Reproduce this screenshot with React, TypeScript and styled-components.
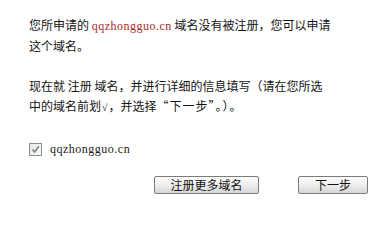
import styled, { createGlobalStyle } from "styled-components";

const GlobalStyle = createGlobalStyle`
  html, body {
    margin: 0;
    padding: 0;
    background: #ffffff;
  }
  body {
    font-family: "Noto Sans CJK SC", "Noto Sans", sans-serif;
    color: #141414;
  }
`;

const App = () => {
  return (
    <>
      <GlobalStyle />
      <Page lang="zh-CN">
        <Paragraph>
          <Line>
            您所申请的 <Domain $red>qqzhongguo.cn</Domain> 域名没有被注册，您可以申请
          </Line>
          <Line>这个域名。</Line>
        </Paragraph>
        <Paragraph $gap>
          <Line>现在就 注册 域名，并进行详细的信息填写（请在您所选</Line>
          <Line>
            中的域名前划<Tick>√</Tick>，并选择<Wide>“下一步”。）。</Wide>
          </Line>
        </Paragraph>
        <CheckRow>
          <CheckBox>
            <svg width="9" height="9" viewBox="0 0 9 9">
              <path
                d="M1.5 4.5 L3.6 7 L7.8 1.2"
                fill="none"
                stroke="#76818f"
                strokeWidth="1.6"
              />
            </svg>
          </CheckBox>
          <Domain>qqzhongguo.cn</Domain>
        </CheckRow>
        <ButtonRow>
          <Button $width={105}>注册更多域名</Button>
          <Button $width={70}>下一步</Button>
        </ButtonRow>
      </Page>
    </>
  );
};

export default App;

const Page = styled.div`
  width: 380px;
  height: 213px;
  box-sizing: border-box;
  padding: 15px 0 0 29px;
  overflow: hidden;
`;

const Paragraph = styled.div<{ $gap?: boolean }>`
  margin-top: ${(p) => (p.$gap ? "20px" : "0")};
  font-size: 12px;
  line-height: 20px;
`;

const Line = styled.div`
  white-space: nowrap;
`;

const Tick = styled.span`
  font-family: "Liberation Serif", serif;
  font-size: 10px;
  padding: 0 1px;
`;

const Wide = styled.span`
  font-feature-settings: "fwid" 1;
  letter-spacing: 1px;
`;

const Domain = styled.span<{ $red?: boolean }>`
  font-family: "Liberation Serif", "DejaVu Serif", serif;
  font-size: 12px;
  letter-spacing: 0.5px;
  color: ${(p) => (p.$red ? "#a8282c" : "#1a1a1a")};
`;

const CheckRow = styled.div`
  display: flex;
  align-items: center;
  gap: 8px;
  height: 20px;
  margin-top: 21px;
`;

const CheckBox = styled.span`
  display: flex;
  align-items: center;
  justify-content: center;
  width: 13px;
  height: 13px;
  box-sizing: border-box;
  border: 1px solid #8e8e8e;
  background: linear-gradient(135deg, #e4e4e4, #fbfbfb);
`;

const ButtonRow = styled.div`
  display: flex;
  justify-content: flex-end;
  gap: 39px;
  padding-right: 12px;
  margin-top: 17px;
`;

const Button = styled.button<{ $width: number }>`
  width: ${(p) => p.$width}px;
  height: 18px;
  padding: 0;
  box-sizing: border-box;
  border: 1px solid #7c7c7c;
  border-radius: 2px;
  background: linear-gradient(#fdfdfd, #ececec 55%, #d6d6d6);
  font-family: "Noto Sans CJK SC", "Noto Sans", sans-serif;
  font-size: 12px;
  line-height: 16px;
  color: #111111;
`;
